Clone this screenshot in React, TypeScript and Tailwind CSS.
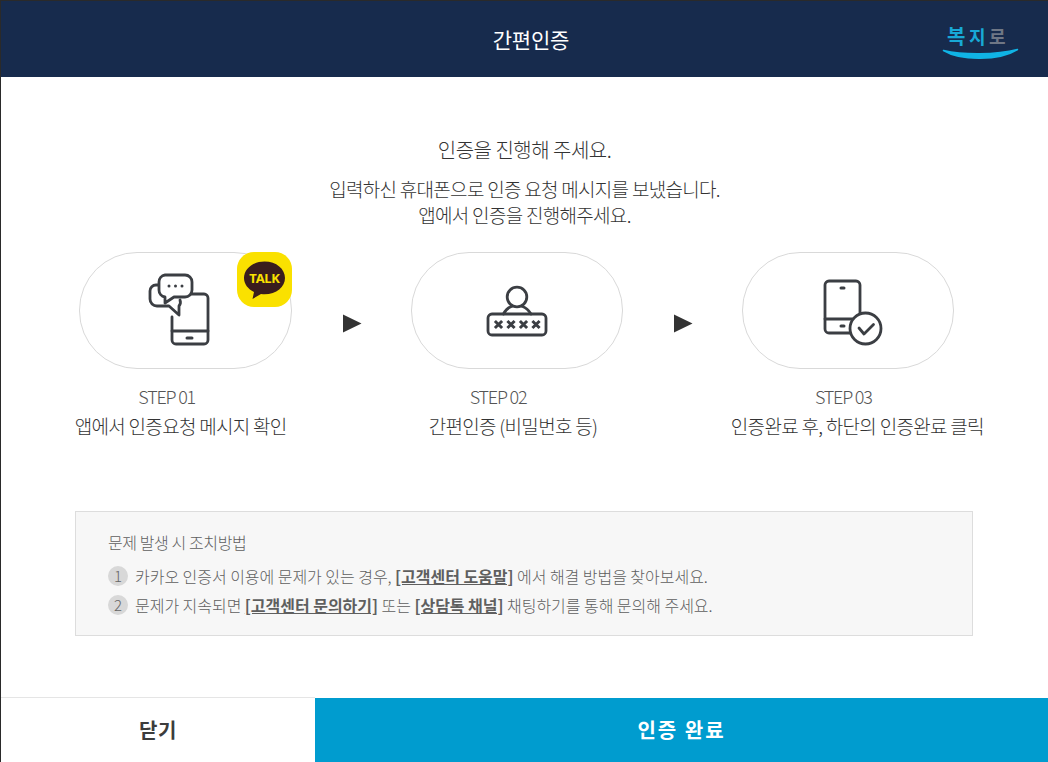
const KR = 'font-["Noto_Sans_CJK_KR","Noto_Sans",sans-serif]'

function Pill({ children, w }: { children?: React.ReactNode; w: string }) {
  return (
    <div className={`relative ${w} h-[117px] shrink-0 rounded-[58px] border border-[#d9d9d9] bg-white`}>
      {children}
    </div>
  )
}

function Arrow() {
  return (
    <div className="w-[119px] h-[117px] shrink-0 flex items-center justify-center pt-[25px] pl-[2px]">
      <svg width="19" height="19" viewBox="0 0 19 19">
        <path d="M0 0.5 L18.5 9.5 L0 18.5 Z" fill="#333333" />
      </svg>
    </div>
  )
}

function PhoneIcon() {
  return (
    <svg className="absolute inset-0" width="213" height="117" viewBox="0 0 213 117" fill="none" stroke="#3b3e43" strokeWidth="2.8" strokeLinecap="round" strokeLinejoin="round">
      <path d="M110 41 H124 a4 4 0 0 1 4 4 V87 a4 4 0 0 1 -4 4 H96 a4 4 0 0 1 -4 -4 V64" />
      <path d="M92 78 H128" />
      <path d="M107 85 H112" strokeWidth="3" />
      <path d="M78 32 H76 a6 6 0 0 0 -6 6 V46 a7 7 0 0 0 7 7 H89 L99 62 V53 a6 6 0 0 0 1 -6" />
      <path d="M85 22 H105 a7 7 0 0 1 7 7 V37 a7 7 0 0 1 -7 7 H94 L85 50 V44 a7 7 0 0 1 -6 -7 V29 a7 7 0 0 1 6 -7 Z" fill="white" />
      <circle cx="89" cy="33" r="1.5" fill="#3b3e43" stroke="none" />
      <circle cx="95.5" cy="33" r="1.5" fill="#3b3e43" stroke="none" />
      <circle cx="102" cy="33" r="1.5" fill="#3b3e43" stroke="none" />
    </svg>
  )
}

function PasswordIcon() {
  return (
    <svg className="absolute inset-0" width="212" height="117" viewBox="0 0 212 117" fill="none" stroke="#3b3e43" strokeWidth="2.8" strokeLinecap="round" strokeLinejoin="round">
      <circle cx="105" cy="44" r="9.8" />
      <path d="M91.5 61 C94 56 98 54 99.5 53.5 M110.5 53.5 C112 54 116 56 119 61" />
      <rect x="76" y="61" width="58" height="21" rx="4" />
      {[86.5, 99, 111.5, 124].map((x) => (
        <path key={x} d={`M${x - 3.6} ${68} L${x + 3.6} ${75} M${x + 3.6} ${68} L${x - 3.6} ${75}`} strokeWidth="3" strokeLinecap="butt" />
      ))}
    </svg>
  )
}

function DoneIcon() {
  return (
    <svg className="absolute inset-0" width="212" height="117" viewBox="0 0 212 117" fill="none" stroke="#3b3e43" strokeWidth="2.8" strokeLinecap="round" strokeLinejoin="round">
      <rect x="82" y="28" width="35" height="52" rx="4" />
      <path d="M82 66 H117" />
      <path d="M98 35 H101" strokeWidth="3" />
      <path d="M98 73 H101" strokeWidth="3" />
      <circle cx="122.5" cy="75.5" r="15.5" fill="white" />
      <path d="M116 75 L121 81 L130.5 71.5" />
    </svg>
  )
}

function TalkBadge() {
  return (
    <div className="absolute -top-px -right-px w-[55px] h-[55px] rounded-[17px] bg-[#fae100]">
      <svg width="55" height="55" viewBox="0 0 55 55">
        <path d="M27.5 9.5 C15.5 9.5 7 17 7 26 C7 32 11 37 17 40 L15.5 47 L24 42 C25.5 42.2 26.5 42.3 27.5 42.3 C39.5 42.3 48 35 48 26 C48 17 39.5 9.5 27.5 9.5 Z" fill="#3a1d1d" />
        <text x="27.5" y="31" textAnchor="middle" fontSize="13" fontWeight="700" fill="#fae100" fontFamily="'Noto Sans', sans-serif" letterSpacing="-0.3">TALK</text>
      </svg>
    </div>
  )
}

function Logo() {
  return (
    <div className="absolute left-[941px] top-[24px] w-[80px] h-[36px]">
      <div className="flex items-center h-[22px] pl-[6px] text-[20px] leading-[22px] font-bold tracking-[3.5px] whitespace-nowrap">
        <span className="text-[#18a9d6]">복</span>
        <span className="text-[#18a9d6] text-[18px]">지</span>
        <span className="text-[#6f7785] text-[18px]">로</span>
      </div>
      <svg className="absolute left-0 top-[20px]" width="80" height="16" viewBox="0 0 80 16">
        <path d="M2.5 5.5 C22 10 55 10 76.5 4.5 C58 16 20 16 2.5 5.5 Z" fill="#10b4e6" stroke="#10b4e6" strokeWidth="1.5" strokeLinejoin="round" />
      </svg>
    </div>
  )
}

function Num({ n }: { n: number }) {
  return (
    <span className="w-[20px] h-[20px] rounded-full bg-[#d8d8d8] flex items-center justify-center text-[15px] text-[#666] mr-[7px] shrink-0">
      {n}
    </span>
  )
}

export default function App() {
  return (
    <div className={`w-[1048px] h-[762px] flex flex-col bg-white border-l border-t border-[#2a2a2a] overflow-hidden ${KR}`}>
      <header className="relative -ml-px h-[76px] shrink-0 bg-[#172b4d] flex items-center justify-center pl-[14px] pt-[2px]">
        <h1 className="text-[21px] text-white font-normal tracking-[-0.2px]">간편인증</h1>
        <Logo />
      </header>

      <main className="flex-1 flex flex-col text-[#333]">
        <div className="pt-[60px] flex flex-col items-center text-[19px] font-light tracking-[-0.7px]">
          <p className="leading-[26px] text-[20px] tracking-[-0.5px]">인증을 진행해 주세요.</p>
          <p className="mt-[13px] leading-[26px] text-center">
            입력하신 휴대폰으로 인증 요청 메시지를 보냈습니다.
            <br />
            앱에서 인증을 진행해주세요.
          </p>
        </div>

        <div className="mt-[24px] ml-[78px] flex">
          <Pill w="w-[213px]">
            <PhoneIcon />
            <TalkBadge />
          </Pill>
          <Arrow />
          <Pill w="w-[212px]">
            <PasswordIcon />
          </Pill>
          <Arrow />
          <Pill w="w-[212px]">
            <DoneIcon />
          </Pill>
        </div>

        <div className="mt-[12px] ml-[20px] w-[994px] grid grid-cols-3 text-center whitespace-nowrap">
          <div className="flex flex-col items-center">
            <span className="pr-[40px] text-[18px] leading-[30px] font-light text-[#555] tracking-[-1.2px]">STEP 01</span>
            <span className="pr-[12px] text-[19px] leading-[30px] font-light tracking-[-0.7px]">앱에서 인증요청 메시지 확인</span>
          </div>
          <div className="flex flex-col items-center">
            <span className="pr-[40px] text-[18px] leading-[30px] font-light text-[#555] tracking-[-1.2px]">STEP 02</span>
            <span className="pr-[10px] text-[19px] leading-[30px] font-light tracking-[-0.7px]">간편인증 (비밀번호 등)</span>
          </div>
          <div className="flex flex-col items-center">
            <span className="pr-[12px] text-[18px] leading-[30px] font-light text-[#555] tracking-[-1.2px]">STEP 03</span>
            <span className="pl-[16px] text-[19px] leading-[30px] font-light tracking-[-0.7px]">인증완료 후, 하단의 인증완료 클릭</span>
          </div>
        </div>

        <section className="mt-[70px] ml-[74px] w-[898px] h-[125px] border border-[#dddddd] bg-[#f7f7f7] pl-[32px] pt-[18px] text-[16px] text-[#5f5f5f] tracking-[-0.03px]">
          <p className="leading-[24px] font-light tracking-[-0.4px]">문제 발생 시 조치방법</p>
          <p className="mt-[10px] flex items-center h-[24px] font-light whitespace-pre">
            <Num n={1} />
            카카오 인증서 이용에 문제가 있는 경우, <b className="font-bold underline">[고객센터 도움말]</b> 에서 해결 방법을 찾아보세요.
          </p>
          <p className="mt-[5px] flex items-center h-[24px] font-light whitespace-pre">
            <Num n={2} />
            문제가 지속되면 <b className="font-bold underline">[고객센터 문의하기]</b> 또는 <b className="font-bold underline">[상담톡 채널]</b> 채팅하기를 통해 문의해 주세요.
          </p>
        </section>
      </main>

      <footer className="h-[65px] shrink-0 flex">
        <button className="w-[314px] border-t border-[#e5e5e5] bg-white text-[20px] font-bold text-[#3c3c3c] tracking-[0.5px]">닫기</button>
        <button className="flex-1 mt-px bg-[#009ccf] text-[20px] font-bold text-white tracking-[2px]">인증 완료</button>
      </footer>
    </div>
  )
}
